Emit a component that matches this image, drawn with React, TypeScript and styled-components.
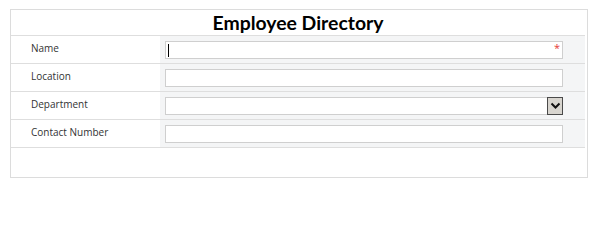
import * as React from "react";
import styled, { createGlobalStyle } from "styled-components";

const GlobalStyle = createGlobalStyle`
html, body {
margin: 0;
padding: 0;
background: #ffffff;
}
body {
font-family: "Open Sans", "Noto Sans", sans-serif;
}
`;

const fields = [
    { label: "Name", kind: "text", required: true, focused: true },
    { label: "Location", kind: "text" },
    { label: "Department", kind: "select" },
    { label: "Contact Number", kind: "text" }
];

export default function App() {
    return <Page>
        <GlobalStyle />
        <Panel>
            <Title>Employee Directory</Title>
            {fields.map(field => (
                <Row key={field.label}>
                    <Label>{field.label}</Label>
                    <FieldCell>
                        <InputBox>
                            {field.focused && <Caret />}
                            {field.required && <Required>*</Required>}
                            {field.kind === "select" && (
                                <DropButton>
                                    <svg width="11" height="8" viewBox="0 0 11 8">
                                        <path d="M1.5 1.5 L5.5 5.5 L9.5 1.5" fill="none" stroke="#111" strokeWidth="2" />
                                    </svg>
                                </DropButton>
                            )}
                        </InputBox>
                    </FieldCell>
                </Row>
            ))}
            <Footer />
        </Panel>
    </Page>;
}

const Page = styled.div`
padding: 9px 0 0 10px;
`;

const Panel = styled.div`
width: 576px;
border: 1px solid #dcdcdc;
display: flex;
flex-direction: column;
`;

const Title = styled.div`
height: 25px;
line-height: 26px;
text-align: center;
font-family: Lato, "Liberation Sans", sans-serif;
font-weight: 700;
font-size: 19.4px;
color: #000;
border-bottom: 1px solid #dedede;
margin-right: 2px;
`;

const Row = styled.div`
display: grid;
grid-template-columns: 149px 1fr;
height: 27px;
border-bottom: 1px solid #dedede;
margin-right: 2px;
`;

const Label = styled.div`
padding: 5px 0 0 20px;
font-size: 10px;
color: #333;
`;

const FieldCell = styled.div`
background: #f4f5f6;
padding: 5px 22px 0 5px;
`;

const InputBox = styled.div`
position: relative;
height: 16px;
border: 1px solid #cfcfcf;
background: #fff;
`;

const Caret = styled.div`
position: absolute;
left: 2px;
top: 2px;
width: 1px;
height: 13px;
background: #000;
`;

const Required = styled.span`
position: absolute;
right: 2px;
top: -1px;
color: #e53935;
font-size: 11px;
line-height: 14px;
`;

const DropButton = styled.div`
position: absolute;
right: -1px;
top: -1px;
width: 14px;
height: 16px;
border: 1px solid #4a4a4a;
background: #d8d5cf;
display: flex;
align-items: center;
justify-content: center;
`;

const Footer = styled.div`
height: 29px;
`;
